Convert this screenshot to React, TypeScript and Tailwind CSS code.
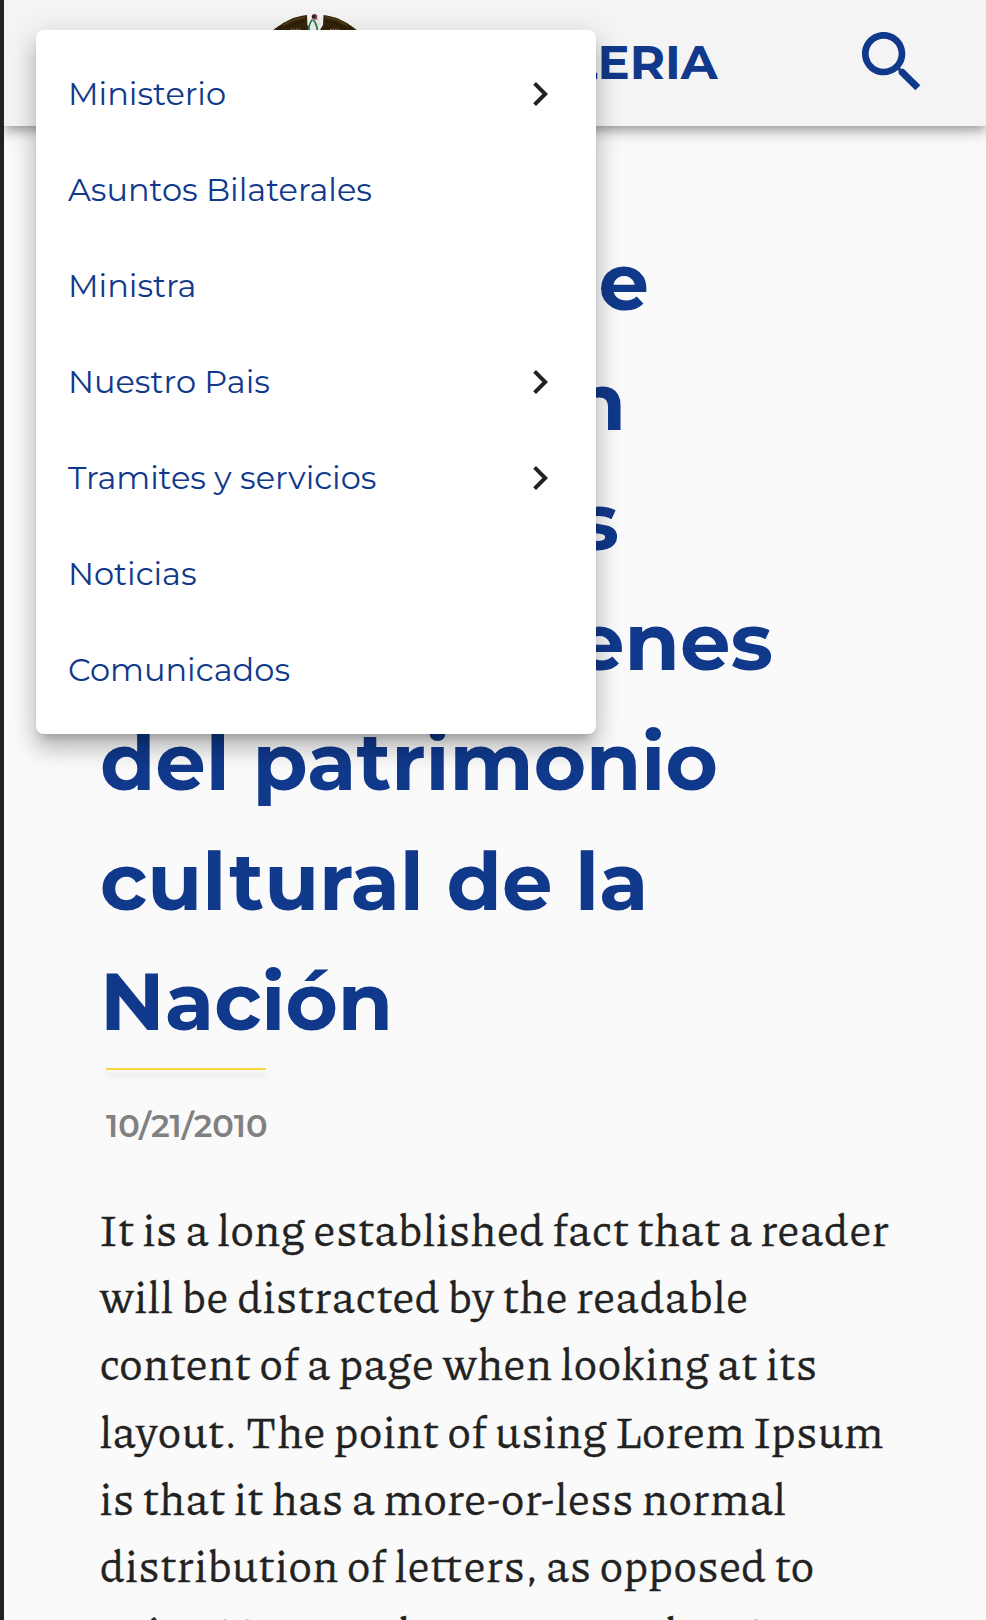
type MenuEntry = { label: string; nested?: boolean };

const entries: MenuEntry[] = [
  { label: 'Ministerio', nested: true },
  { label: 'Asuntos Bilaterales' },
  { label: 'Ministra' },
  { label: 'Nuestro Pais', nested: true },
  { label: 'Tramites y servicios', nested: true },
  { label: 'Noticias' },
  { label: 'Comunicados' },
];

function SearchIcon() {
  return (
    <svg viewBox="0 0 24 24" className="size-20 shrink-0 fill-current">
      <path d="M15.5 14h-.79l-.28-.27C15.41 12.59 16 11.11 16 9.5 16 5.91 13.09 3 9.5 3S3 5.91 3 9.5 5.91 16 9.5 16c1.61 0 3.09-.59 4.23-1.57l.27.28v.79l5 4.99L20.49 19l-4.99-5zm-6 0C7.01 14 5 11.99 5 9.5S7.01 5 9.5 5 14 7.01 14 9.5 11.99 14 9.5 14z" />
    </svg>
  );
}

function ChevronRight() {
  return (
    <svg viewBox="0 0 24 24" className="size-12 shrink-0 fill-[#222222]">
      <path d="M10 6L8.59 7.41 13.17 12l-4.58 4.59L10 18l6-6z" />
    </svg>
  );
}

function Emblem() {
  return (
    <svg viewBox="0 0 100 90" className="h-[90px] w-[100px] shrink-0">
      <path d="M10 15L18 9l10-5 9-2.300L42 1l.4 10L45 16l4 24H22L15 19z" fill="#35240b" />
      <path d="M90 15L82 9 72 4 63 1.7 58.500 1 58 11l-3 5-4 24h27l7-21z" fill="#35240b" />
      <path d="M18 11l10-5 12-3M82 11L72 6 60 3" stroke="#544017" strokeWidth="1.600" fill="none" />
      <path d="M20 14l10-5 10-2M80 14L70 9 60 7" stroke="#241804" strokeWidth="1" fill="none" />
      <path d="M9 16l6-4M11 18l5-3M91 16l-6-4M89 18l-5-3" stroke="#35240b" strokeWidth="1.200" />
      <path d="M26 15.500h9M65 15.500h9" stroke="#8b8069" strokeWidth="1.500" strokeDasharray="1.500 1" />
      <path d="M46 5l4 2 4-2 2 4-2 4h-5z" fill="#e9e9e9" />
      <path d="M43.500 19c0-7 1.500-11 4-13.500M52.500 19c0-6-1.500-10-4-13" stroke="#287447" strokeWidth="1.700" fill="none" />
      <circle cx="49.500" cy="2.800" r="2.800" fill="#7c3a43" />
      <circle cx="48.500" cy="2.400" r="1.500" fill="#1d1b2c" />
      <circle cx="51.500" cy="5" r="1" fill="#c66c6c" />
    </svg>
  );
}

function Header() {
  return (
    <header className="flex h-[126px] items-start bg-[#f4f4f4] text-[#10398b] shadow-[0_4px_8px_-2px_rgba(0,0,0,0.2),0_8px_10px_0_rgba(0,0,0,0.14),0_2px_20px_0_rgba(0,0,0,0.12)]">
      <div className="ml-[261px] pt-3.5">
        <Emblem />
      </div>
      <div className="w-[352.5px] pt-[26px] text-right text-5xl leading-[72px] font-bold">CANCILLERIA</div>
      <button aria-label="Buscar" className="mt-[22px] ml-[134.5px]">
        <SearchIcon />
      </button>
    </header>
  );
}

function Menu() {
  return (
    <nav className="absolute top-[30px] left-9 flex w-[560px] flex-col rounded-lg bg-white py-4 shadow-[0_10px_10px_-6px_rgba(0,0,0,0.2),0_16px_20px_2px_rgba(0,0,0,0.14),0_6px_28px_4px_rgba(0,0,0,0.12)]">
      {entries.map((entry) => (
        <a key={entry.label} className="flex h-24 items-center justify-between px-8 text-[32px] leading-[48px] text-[#10398b]">
          <span>{entry.label}</span>
          {entry.nested && <ChevronRight />}
        </a>
      ))}
    </nav>
  );
}

function Article() {
  return (
    <article className="flex flex-col px-24 pt-24">
      <h1 className="text-[80px] leading-[120px] font-bold text-[#10398b]">
        <span className="block w-[549px] text-right">Campaña de</span>
        <span className="block w-[526px] text-right">protección</span>
        <span className="block w-[519px] text-right">de todos los</span>
        <span className="block w-[673px] text-right">grandes bienes</span>
        <span className="block whitespace-nowrap">del patrimonio</span>
        <span className="block">
          cul<span className="ml-[3px]">tural de la</span>
        </span>
        <span className="block">Nación</span>
      </h1>
      <div className="mt-1.5 ml-1.5 h-0.5 w-40 bg-[#fdd43b] shadow-[0_6px_6px_rgba(0,0,0,0.16)]" />
      <time className="mt-8 ml-1.5 text-[32px] leading-[48px] font-semibold text-[#808080]">10/21/2010</time>
      <p className="mt-[45px] w-[800px] font-['Piazzolla','Liberation_Serif',serif] text-[44.8px] leading-[67.2px] tracking-[1.24px] text-[#222222] [-webkit-text-stroke:0.4px_#222222]">
        It is a long established fact that a reader will be distracted by the readable content of a page when looking at its
        layout. The point of using Lorem Ipsum is that it has a more-or-less normal distribution of
        le<span className="mr-[2.4px] tracking-normal">tt</span>ers, as opposed to using 'Content here, content here',
        making it look like readable English.
      </p>
    </article>
  );
}

export default function App() {
  return (
    <div className="relative h-[1620px] w-full overflow-hidden border-l-4 border-[#24211f] bg-[#fafafa] font-['Montserrat','Open_Sans',sans-serif]">
      <div className="relative -ml-1 pl-1">
        <Header />
        <Article />
        <Menu />
      </div>
    </div>
  );
}
